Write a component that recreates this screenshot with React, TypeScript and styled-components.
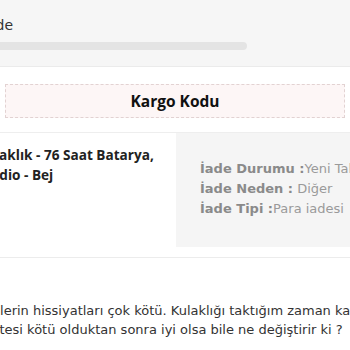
import styled, { createGlobalStyle } from 'styled-components';

const GlobalStyle = createGlobalStyle`
  html, body {
    margin: 0;
    padding: 0;
    background: #ffffff;
    overflow: hidden;
  }
  body {
    font-family: 'DejaVu Sans', 'Open Sans', sans-serif;
    color: #333;
  }
`;

const Page = styled.div`
  width: 350px;
  height: 350px;
  overflow: hidden;
`;

const StatusBar = styled.div`
  height: 67px;
  background: #f6f6f6;
  border-bottom: 1px solid #ebebeb;
  padding-top: 15px;
  box-sizing: border-box;
`;

const StatusLabel = styled.div`
  margin-left: -42px;
  font-size: 14px;
  line-height: 20px;
  color: #333;
  white-space: nowrap;
`;

const ProgressTrack = styled.div`
  margin: 7px 0 0 -20px;
  width: 267px;
  height: 8px;
  border-radius: 4px;
  background: #e4e4e4;
`;

const CargoSection = styled.div`
  padding: 17px 5px 14px 5px;
  border-bottom: 1px solid #eeeeee;
`;

const CargoBox = styled.div`
  height: 32px;
  display: flex;
  align-items: center;
  justify-content: center;
  background: #fdf6f6;
  border: 1px dashed #e2d2d2;
  font-family: 'Open Sans', sans-serif;
  font-size: 15.5px;
  font-weight: 700;
  color: #111;
`;

const ItemRow = styled.div`
  display: grid;
  grid-template-columns: 176px 1fr;
  height: 114px;
`;

const ItemTitle = styled.div`
  margin-left: -23px;
  padding-top: 12px;
  font-family: 'Open Sans', sans-serif;
  font-size: 13.6px;
  line-height: 20px;
  font-weight: 700;
  color: #222;
  white-space: nowrap;
`;

const ReturnPanel = styled.div`
  background: #f5f5f5;
  padding: 26px 0 0 24px;
  white-space: nowrap;
`;

const ReturnLine = styled.div`
  font-size: 13px;
  line-height: 20px;
  color: #9a9a9a;
`;

const ReturnLabel = styled.span`
  font-weight: 700;
  color: #8a8a8a;
`;

const CommentSection = styled.div`
  margin-top: 10px;
  border-top: 1px solid #ececec;
  padding-top: 43px;
`;

const CommentText = styled.p`
  margin: 0 0 0 -23px;
  font-size: 13px;
  line-height: 19px;
  color: #333;
  white-space: nowrap;
`;

export default function App() {
  return (
    <Page>
      <GlobalStyle />
      <StatusBar>
        <StatusLabel>İşlemde</StatusLabel>
        <ProgressTrack />
      </StatusBar>
      <CargoSection>
        <CargoBox>Kargo Kodu</CargoBox>
      </CargoSection>
      <ItemRow>
        <ItemTitle>
          Kulaklık - 76 Saat Batarya,
          <br />
          Studio - Bej
        </ItemTitle>
        <ReturnPanel>
          <ReturnLine>
            <ReturnLabel>İade Durumu :</ReturnLabel>Yeni Talep
          </ReturnLine>
          <ReturnLine>
            <ReturnLabel>İade Neden :</ReturnLabel> Diğer
          </ReturnLine>
          <ReturnLine>
            <ReturnLabel>İade Tipi :</ReturnLabel>Para iadesi
          </ReturnLine>
        </ReturnPanel>
      </ItemRow>
      <CommentSection>
        <CommentText>
          Seslerin hissiyatları çok kötü. Kulaklığı taktığım zaman kafamı sıkıyor. Ses
          <br />
          kalitesi kötü olduktan sonra iyi olsa bile ne değiştirir ki ?
        </CommentText>
      </CommentSection>
    </Page>
  );
}
